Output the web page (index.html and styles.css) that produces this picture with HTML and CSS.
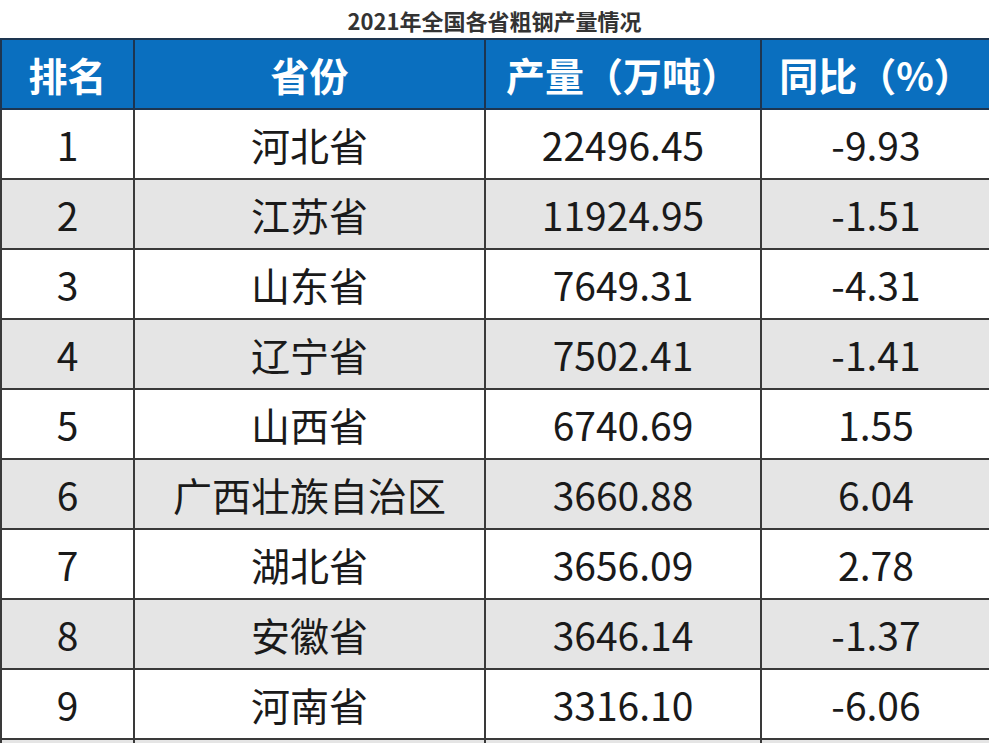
FILE: index.html
```html
<!DOCTYPE html>
<html lang="zh-CN">
<head>
<meta charset="utf-8">
<title>2021年全国各省粗钢产量情况</title>
<link rel="stylesheet" href="styles.css">
</head>
<body>
<h1 class="title">2021年全国各省粗钢产量情况</h1>
<table class="steel">
  <colgroup>
    <col class="c-rank">
    <col class="c-prov">
    <col class="c-out">
    <col class="c-yoy">
  </colgroup>
  <thead>
    <tr><th>排名</th><th>省份</th><th>产量（万吨）</th><th>同比（%）</th></tr>
  </thead>
  <tbody>
    <tr><td>1</td><td>河北省</td><td>22496.45</td><td>-9.93</td></tr>
    <tr class="alt"><td>2</td><td>江苏省</td><td>11924.95</td><td>-1.51</td></tr>
    <tr><td>3</td><td>山东省</td><td>7649.31</td><td>-4.31</td></tr>
    <tr class="alt"><td>4</td><td>辽宁省</td><td>7502.41</td><td>-1.41</td></tr>
    <tr><td>5</td><td>山西省</td><td>6740.69</td><td>1.55</td></tr>
    <tr class="alt"><td>6</td><td>广西壮族自治区</td><td>3660.88</td><td>6.04</td></tr>
    <tr><td>7</td><td>湖北省</td><td>3656.09</td><td>2.78</td></tr>
    <tr class="alt"><td>8</td><td>安徽省</td><td>3646.14</td><td>-1.37</td></tr>
    <tr><td>9</td><td>河南省</td><td>3316.10</td><td>-6.06</td></tr>
    <tr class="alt"><td></td><td></td><td></td><td></td></tr>
  </tbody>
</table>
</body>
</html>
```

FILE: styles.css
```css
html, body {
  margin: 0;
  padding: 0;
  background: #ffffff;
}
body {
  font-family: "Noto Sans CJK SC", "Noto Sans", sans-serif;
  overflow: hidden;
}
.title {
  margin: 0;
  height: 38px;
  line-height: 40px;
  text-align: center;
  font-size: 22px;
  font-weight: 700;
  color: #333333;
}
.steel {
  border-collapse: collapse;
  table-layout: fixed;
  width: 990px;
}
.c-rank { width: 133px; }
.c-prov { width: 351px; }
.c-out { width: 276px; }
.c-yoy { width: 230px; }
.steel th,
.steel td {
  border: 2px solid #333333;
  padding: 0;
  text-align: center;
  vertical-align: middle;
  white-space: nowrap;
}
.steel thead tr {
  height: 70px;
}
.steel th {
  background: #0a6fbf;
  color: #ffffff;
  font-size: 39px;
  font-weight: 700;
  border-color: #1d3550;
  line-height: 1;
}
.steel th .paren {
  letter-spacing: 0;
}
.steel tbody tr {
  height: 70px;
}
.steel td {
  font-size: 39px;
  font-weight: 400;
  color: #1a1a1a;
  line-height: 1;
  border-color: #3a3a3a;
}
.steel tr.alt td {
  background: #e5e5e5;
}
```
